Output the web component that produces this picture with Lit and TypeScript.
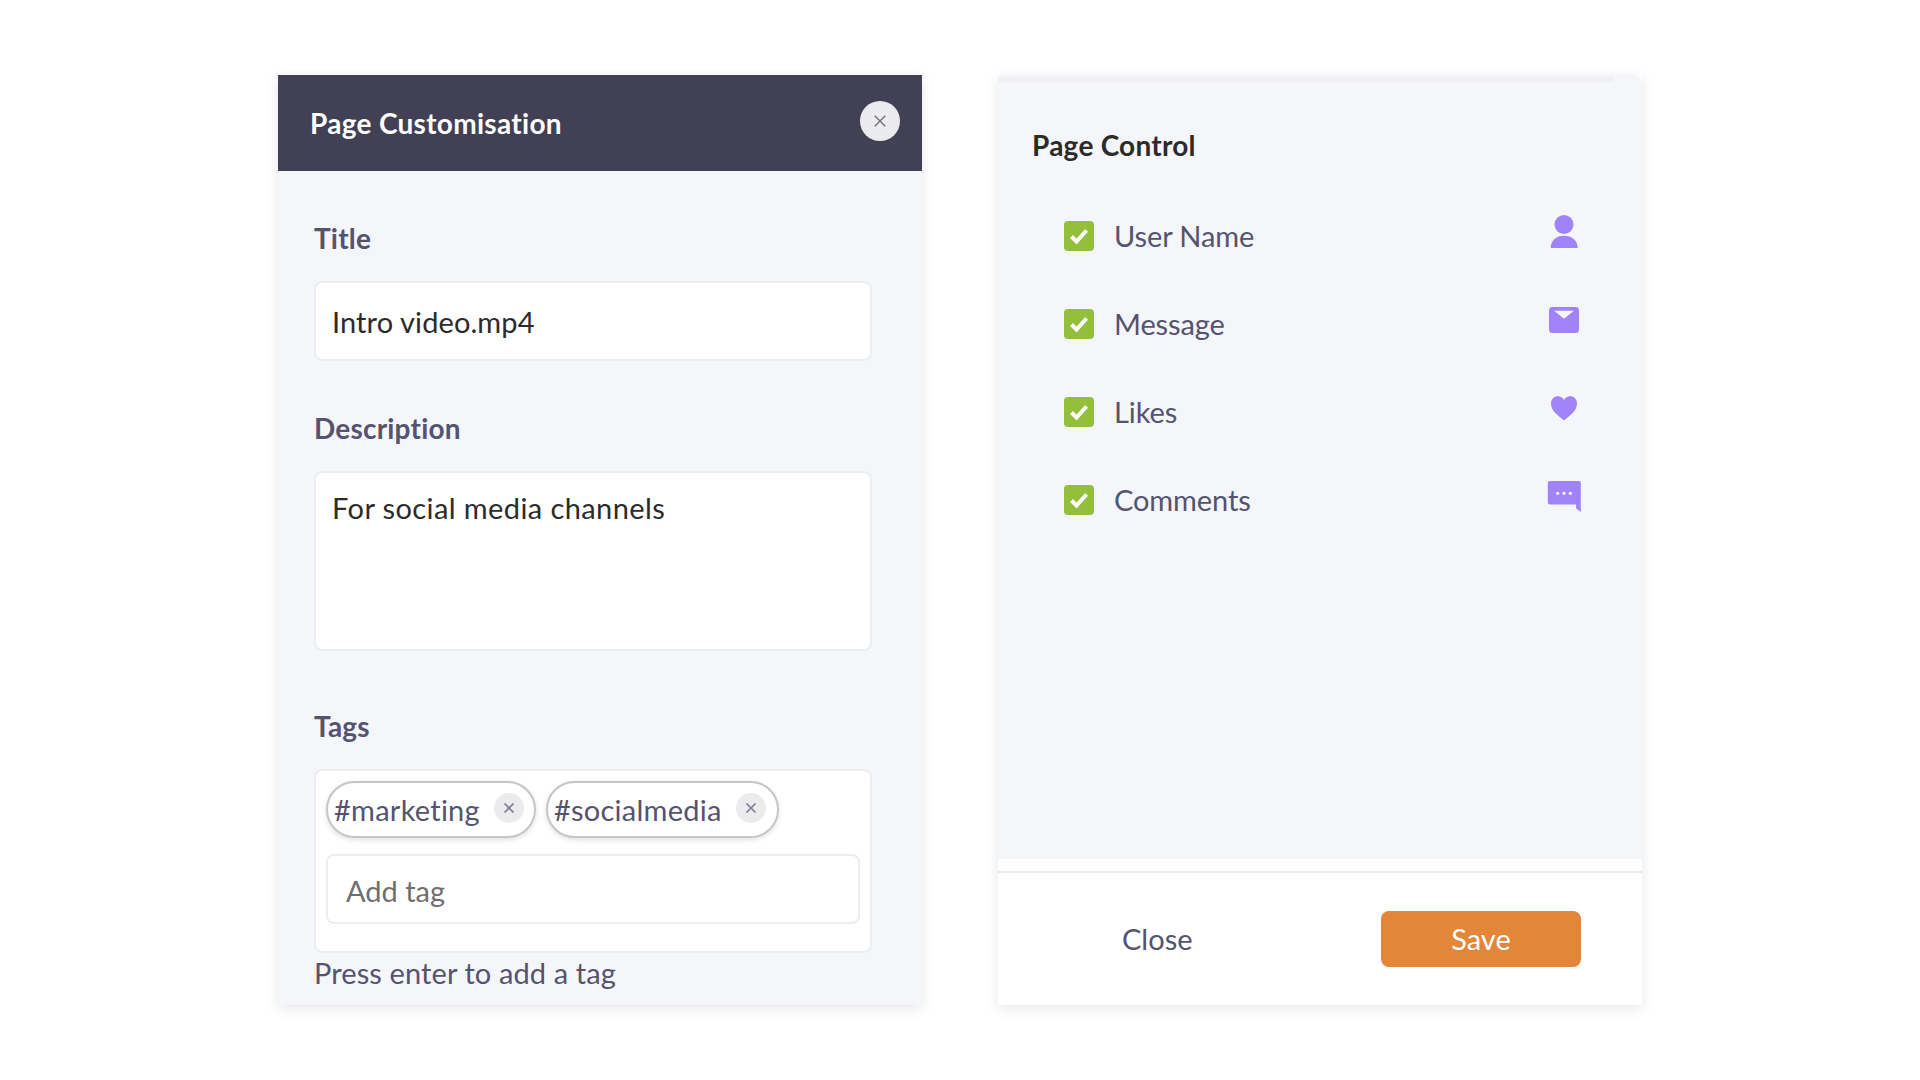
import { LitElement, html, css, svg } from "lit";
import { customElement } from "lit/decorators.js";

const closeIcon = (size: number, color: string, w = 1.3) => html`<svg width=${size} height=${size} viewBox="0 0 12 12" fill="none" stroke=${color} stroke-width=${w}><path d="M1.5 1.5l9 9M10.5 1.5l-9 9"/></svg>`;

const icons: Record<string, unknown> = {
  user: svg`<circle cx="20" cy="12.500" r="9.500" fill="#a084f7"/><path d="M6.700 36c0-7.500 5.500-12.200 13.300-12.200S33.700 28.500 33.700 36z" fill="#a084f7"/>`,
  mail: svg`<rect x="5" y="7" width="30" height="26" rx="3.500" fill="#a084f7"/><path d="M10 10.700h20l-10 8z" fill="#f4f6fa"/>`,
  heart: svg`<path d="M20 32.500C15 28 7 23.500 7 15.500 7 11 10.300 8.300 13.800 8.300c2.700 0 4.900 1.400 6.200 3.600 1.300-2.200 3.500-3.600 6.200-3.600 3.500 0 6.800 2.700 6.800 7.200 0 8-8 12.500-13 17z" fill="#a084f7"/>`,
  chat: svg`<path d="M6 5h28.500c1.500 0 2.300.8 2.300 2.300V36l-4.500-3.500-.5-4H6c-1.500 0-2.200-.8-2.200-2.200V7.300C3.800 5.800 4.500 5 6 5z" fill="#a084f7"/><circle cx="13.700" cy="17.300" r="1.600" fill="#fff"/><circle cx="20" cy="17.300" r="1.600" fill="#fff"/><circle cx="26.300" cy="17.300" r="1.600" fill="#fff"/>`,
};

@customElement("app-root")
export class AppRoot extends LitElement {
  static styles = css`
    :host { display: block; width: 1920px; height: 1080px; background: #fff; font-family: "Lato", "Open Sans", sans-serif; overflow: hidden; box-sizing: border-box; }
    * { box-sizing: border-box; }
    .page { display: flex; gap: 76px; padding: 75px 0 0 278px; align-items: flex-start; }
    .panel { height: 930px; box-shadow: 0 3px 12px rgba(60, 60, 80, .12); }
    .left { width: 644px; background: #f4f6fa; display: flex; flex-direction: column; }
    .head { height: 96px; background: #424054; display: flex; align-items: center; justify-content: space-between; padding: 0 22px 0 32px; color: #fff; font-weight: 700; font-size: 28px; letter-spacing: .3px; }
    .head .x { width: 40px; height: 40px; border-radius: 50%; background: #ebebee; display: flex; align-items: center; justify-content: center; margin-top: -4px; }
    .body { padding: 0 50px 0 36px; }
    .label { font-size: 28px; font-weight: 700; color: #55536e; line-height: 36px; letter-spacing: .2px; }
    .box { background: #fff; border: 2px solid #ecedf0; border-radius: 8px; color: #2b2b2b; font-size: 29px; letter-spacing: .25px; }
    .title-l { margin-top: 49px; }
    .title-box { height: 80px; margin-top: 25px; padding: 21px 16px 0; line-height: 36px; letter-spacing: .1px; }
    .desc-l { margin-top: 49px; }
    .desc-box { height: 180px; margin-top: 25px; padding: 17px 16px 0; line-height: 36px; letter-spacing: .4px; }
    .tags-l { margin-top: 57px; }
    .tags-box { height: 184px; margin-top: 25px; padding: 10px 10px 0; }
    .tags { display: flex; gap: 10px; }
    .tag { height: 57px; border: 2px solid #c6c6ca; border-radius: 29px; box-shadow: 0 2px 5px rgba(0,0,0,.12); display: flex; align-items: center; padding: 0 10px 0 6px; color: #55536e; background: #fff; gap: 14px; }
    .tag:last-child { padding-right: 11px; }
    .tag .x { width: 30px; height: 30px; border-radius: 50%; background: #ebebee; display: flex; align-items: center; justify-content: center; margin-top: -3px; }
    .add { height: 70px; margin-top: 16px; border: 2px solid #ecedf0; border-radius: 8px; padding: 2px 18px 0; display: flex; align-items: center; color: #6f6f6f; letter-spacing: 0; }
    .hint { color: #55536e; font-size: 29px; line-height: 36px; margin-top: 2px; letter-spacing: .1px; }
    .right { width: 644px; background: #fff; display: flex; flex-direction: column; }
    .top { height: 784px; background: #f4f6fa; border-top-right-radius: 8px; display: flex; flex-direction: column; }
    .strip { width: 616px; height: 5px; background: #f0f0f3; margin-top: 2px; }
    .rc { font-size: 28px; font-weight: 700; color: #2b2b2b; line-height: 36px; margin: 45px 0 0 34px; letter-spacing: .25px; }
    .rows { display: flex; flex-direction: column; margin: 29px 58px 0 66px; }
    .row { height: 88px; display: flex; align-items: center; color: #55536e; font-size: 29px; }
    .check { width: 30px; height: 30px; border-radius: 4px; background: #94bf3c; display: flex; align-items: center; justify-content: center; margin-right: 20px; }
    .name { flex: 1; padding-bottom: 2px; letter-spacing: -.1px; }
    .icon { display: block; margin-top: -8px; }
    .foot { flex: 1; margin-top: 12px; border-top: 2px solid #ebebee; display: flex; align-items: center; justify-content: space-between; padding: 0 61px 0 124px; }
    .close { font-size: 29px; color: #55536e; padding-bottom: 2px; }
    .save { width: 200px; height: 56px; background: #e28639; border-radius: 8px; color: #fff; font-size: 29px; display: flex; align-items: center; justify-content: center; padding-bottom: 2px; }
  `;

  render() {
    return html`<div class="page">
      <section class="panel left">
        <div class="head"><span>Page Customisation</span><span class="x">${closeIcon(14, "#6b6b70", 1.1)}</span></div>
        <div class="body">
          <div class="label title-l">Title</div>
          <div class="box title-box">Intro video.mp4</div>
          <div class="label desc-l">Description</div>
          <div class="box desc-box">For social media channels</div>
          <div class="label tags-l">Tags</div>
          <div class="box tags-box">
            <div class="tags">
              ${["#marketing", "#socialmedia"].map(t => html`<div class="tag"><span>${t}</span><span class="x">${closeIcon(12, "#7a7a90", 1.6)}</span></div>`)}
            </div>
            <div class="add">Add tag</div>
          </div>
          <div class="hint">Press enter to add a tag</div>
        </div>
      </section>
      <section class="panel right">
        <div class="top">
          <div class="strip"></div>
          <div class="rc">Page Control</div>
          <div class="rows">
            ${[["User Name","user"],["Message","mail"],["Likes","heart"],["Comments","chat"]].map(([n,i]) => html`<div class="row">
              <span class="check"><svg width="20" height="18" viewBox="0 0 20 18" fill="none" stroke="#fff" stroke-width="4"><path d="M2.500 9.500l5 5 10-11"/></svg></span>
              <span class="name">${n}</span>
              <svg class="icon" width="40" height="40" viewBox="0 0 40 40">${icons[i]}</svg>
            </div>`)}
          </div>
        </div>
        <div class="foot"><span class="close">Close</span><span class="save">Save</span></div>
      </section>
    </div>`;
  }
}
